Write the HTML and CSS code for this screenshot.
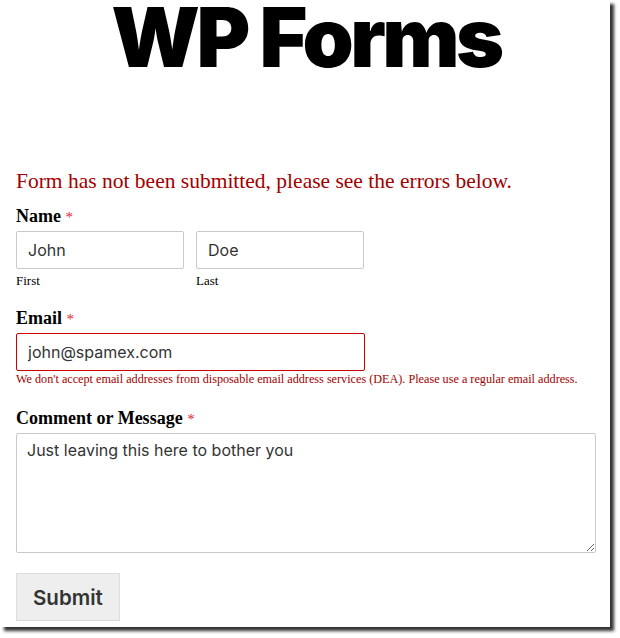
FILE: index.html
```html
<!DOCTYPE html>
<html lang="en">
<head>
<meta charset="utf-8">
<title>WP Forms</title>
<link rel="stylesheet" href="styles.css">
</head>
<body>
<div class="card">
  <h1 class="title">WP Forms</h1>
  <p class="form-error">Form has not been submitted, please see the errors below.</p>
  <form class="form">
    <div class="field">
      <label class="label">Name <span class="req">*</span></label>
      <div class="name-row">
        <div class="name-col">
          <input class="input" type="text" value="John">
          <span class="sublabel">First</span>
        </div>
        <div class="name-col">
          <input class="input" type="text" value="Doe">
          <span class="sublabel">Last</span>
        </div>
      </div>
    </div>
    <div class="field field-email">
      <label class="label">Email <span class="req">*</span></label>
      <input class="input input-email input-error" type="text" value="john@spamex.com">
      <span class="field-error">We don't accept email addresses from disposable email address services (DEA). Please use a regular email address.</span>
    </div>
    <div class="field field-comment">
      <label class="label">Comment or Message <span class="req">*</span></label>
      <textarea class="textarea">Just leaving this here to bother you</textarea>
    </div>
    <div class="actions">
      <button class="submit" type="button">Submit</button>
    </div>
  </form>
</div>
</body>
</html>
```
FILE: styles.css
```css
html, body {
  margin: 0;
  padding: 0;
  background: #fff;
}
body {
  width: 620px;
  height: 638px;
  overflow: hidden;
}
.card {
  width: 610px;
  height: 627px;
  box-sizing: border-box;
  padding: 0 14px 0 16px;
  background: #fff;
  box-shadow: 4px 4px 3px rgba(0, 0, 0, 0.8);
  overflow: hidden;
  font-family: "Liberation Serif", "Times New Roman", serif;
  color: #000;
}
.title {
  margin: 0;
  font-family: Inter, "Liberation Sans", sans-serif;
  font-weight: 900;
  font-size: 82px;
  line-height: 76px;
  letter-spacing: -3.5px;
  text-align: center;
}
.form-error {
  margin: 91px 0 0;
  font-size: 21.5px;
  line-height: 28px;
  color: #a30000;
}
.form {
  display: flex;
  flex-direction: column;
}
.field {
  display: flex;
  flex-direction: column;
  margin-top: 9px;
}
.field-email {
  margin-top: 16px;
}
.field-comment {
  margin-top: 19px;
}
.label {
  display: block;
  font-weight: bold;
  font-size: 18px;
  line-height: 24px;
  margin-bottom: 3px;
}
.req {
  color: #e2232f;
  font-weight: normal;
  font-size: 15px;
  line-height: 0;
}
.name-row {
  display: flex;
  gap: 12px;
}
.name-col {
  display: flex;
  flex-direction: column;
  width: 168px;
}
.input {
  box-sizing: border-box;
  height: 38px;
  width: 168px;
  margin: 0;
  padding: 0 11px;
  border: 1px solid #c9c9c9;
  border-radius: 2px;
  background: #fff;
  font-family: Inter, "Liberation Sans", sans-serif;
  font-size: 16px;
  color: #333;
  outline: none;
}
.input-email {
  width: 349px;
}
.input-error {
  border-color: #cc0000;
}
.sublabel {
  margin-top: 3px;
  font-size: 13px;
  line-height: 18px;
}
.field-error {
  font-size: 12.2px;
  line-height: 16px;
  color: #a30000;
}
.textarea {
  box-sizing: border-box;
  width: 580px;
  height: 120px;
  margin: 0;
  padding: 4px 10px;
  border: 1px solid #c9c9c9;
  border-radius: 2px;
  font-family: Inter, "Liberation Sans", sans-serif;
  font-size: 16px;
  line-height: 1.5;
  color: #333;
  resize: vertical;
  outline: none;
}
.actions {
  margin-top: 20px;
}
.submit {
  box-sizing: border-box;
  height: 48px;
  padding: 0 16px;
  border: 1px solid #dcdcdc;
  border-radius: 0;
  background: #eeeeee;
  font-family: Inter, "Liberation Sans", sans-serif;
  font-weight: 600;
  font-size: 20.5px;
  color: #333;
}
```
